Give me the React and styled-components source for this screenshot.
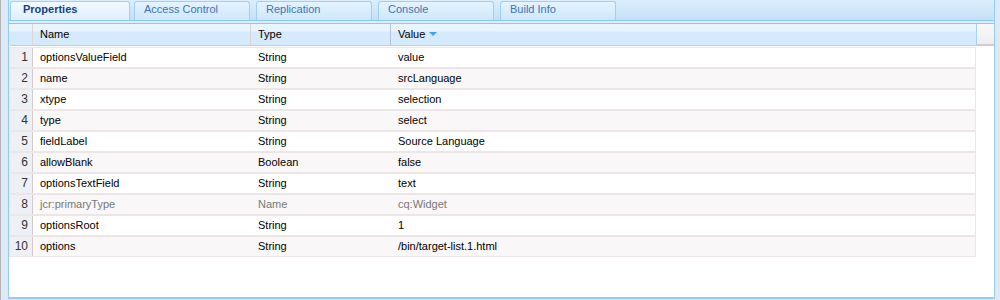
import styled, { createGlobalStyle } from "styled-components";

const GlobalStyle = createGlobalStyle`
  html, body { margin: 0; padding: 0; background: #fff; }
  body { font-family: "Liberation Sans", Arial, sans-serif; font-size: 11px; }
`;

const tabs = ["Properties", "Access Control", "Replication", "Console", "Build Info"];

const rows = [
  ["optionsValueField", "String", "value"],
  ["name", "String", "srcLanguage"],
  ["xtype", "String", "selection"],
  ["type", "String", "select"],
  ["fieldLabel", "String", "Source Language"],
  ["allowBlank", "Boolean", "false"],
  ["optionsTextField", "String", "text"],
  ["jcr:primaryType", "Name", "cq:Widget", true],
  ["optionsRoot", "String", "1"],
  ["options", "String", "/bin/target-list.1.html"],
];

const Page = styled.div`
  height: 300px;
  box-sizing: border-box;
  border-left: 1px solid #b4b4b4;
  background: #dbe9f8;
  padding: 0 5px 0 7px;
  display: flex;
`;

const Panel = styled.div`
  flex: 1;
  display: flex;
  flex-direction: column;
  border-left: 1px solid #99cbef;
  border-right: 1px solid #99cbef;
  border-bottom: 2px solid #99cbef;
  margin-bottom: 1px;
  background: #fff;
`;

const TabStrip = styled.div`
  height: 21px;
  display: flex;
  gap: 6px;
  padding: 1px 0 0 1px;
  box-sizing: border-box;
  background: linear-gradient(#dbeefc, #c3e0f6);
  border-bottom: 1px solid #8ec7ef;
`;

const Tab = styled.div`
  width: ${p => (p.$active ? "120px" : "116px")};
  margin-right: ${p => (p.$active ? "-2px" : "0")};
  height: 19px;
  box-sizing: border-box;
  border: 1px solid #9fd0f2;
  border-bottom: none;
  border-radius: 3px 3px 0 0;
  background: ${p => (p.$active ? "linear-gradient(#f2f9ff, #dfeffc)" : "linear-gradient(#e4f3fe, #cde7fa)")};
  color: ${p => (p.$active ? "#15428b" : "#3f74b3")};
  font-weight: ${p => (p.$active ? "bold" : "normal")};
  padding: 1px 0 0 ${p => (p.$active ? "12px" : "9px")};
`;

const Gap = styled.div`
  height: 2px;
  background: #dcedfc;
  border-bottom: 1px solid #8ec7ef;
`;

const Grid = styled.div`
  display: grid;
  grid-template-columns: 23px 218px 140px 586px 1fr;
`;

const HeadCell = styled.div`
  height: 22px;
  box-sizing: border-box;
  background: linear-gradient(#e9f5fe 0, #e9f5fe 7px, #d5eafc 8px, #d5eafc 100%);
  border-bottom: 1px solid #a6d3f5;
  border-left: 1px solid ${p => (p.$sorted ? "#b8c3cf" : p.$first ? "transparent" : "#dcd3d3")};
  padding: 4px 0 0 7px;
  color: #000;
  display: flex;
  align-items: flex-start;
  gap: 4px;
`;

const Spacer = styled.div`
  height: 22px;
  box-sizing: border-box;
  background: linear-gradient(#f9f9f9, #ebeef2);
  border-bottom: 2px solid #d8c8cb;
  border-left: 1px solid #a6d3f5;
`;

const SortArrow = styled.span`
  width: 0;
  height: 0;
  margin-top: 4px;
  border-left: 4px solid transparent;
  border-right: 4px solid transparent;
  border-top: 4px solid #4a9ee8;
`;

const Body = styled.div`
  padding-top: 1px;
`;

const Row = styled.div`
  display: grid;
  grid-template-columns: 23px 218px 140px 1fr;
  width: 967px;
  height: 21px;
  box-sizing: border-box;
  border: 1px solid #ece6e7;
  background: ${p => (p.$alt ? "#f9f7f7" : "#fff")};
  color: ${p => (p.$muted ? "#777" : "#000")};
`;

const Num = styled.div`
  background: #edf0f4;
  border-right: 1px solid #d6c9c9;
  text-align: right;
  padding: 2px 4px 0 0;
  color: #333;
  font-size: 12px;
`;

const Cell = styled.div`
  padding: 3px 0 0 7px;
  white-space: nowrap;
`;

export default function App() {
  return (
    <>
      <GlobalStyle />
      <Page>
        <Panel>
          <TabStrip>
            {tabs.map((t, i) => (
              <Tab key={t} $active={i === 0}>{t}</Tab>
            ))}
          </TabStrip>
          <Gap />
          <Grid>
            <HeadCell $first />
            <HeadCell>Name</HeadCell>
            <HeadCell>Type</HeadCell>
            <HeadCell $sorted>
              Value <SortArrow />
            </HeadCell>
            <Spacer />
          </Grid>
          <Body>
            {rows.map((r, i) => (
              <Row key={r[0]} $alt={i % 2 === 1} $muted={r[3]}>
                <Num>{i + 1}</Num>
                <Cell>{r[0]}</Cell>
                <Cell>{r[1]}</Cell>
                <Cell>{r[2]}</Cell>
              </Row>
            ))}
          </Body>
        </Panel>
      </Page>
    </>
  );
}
